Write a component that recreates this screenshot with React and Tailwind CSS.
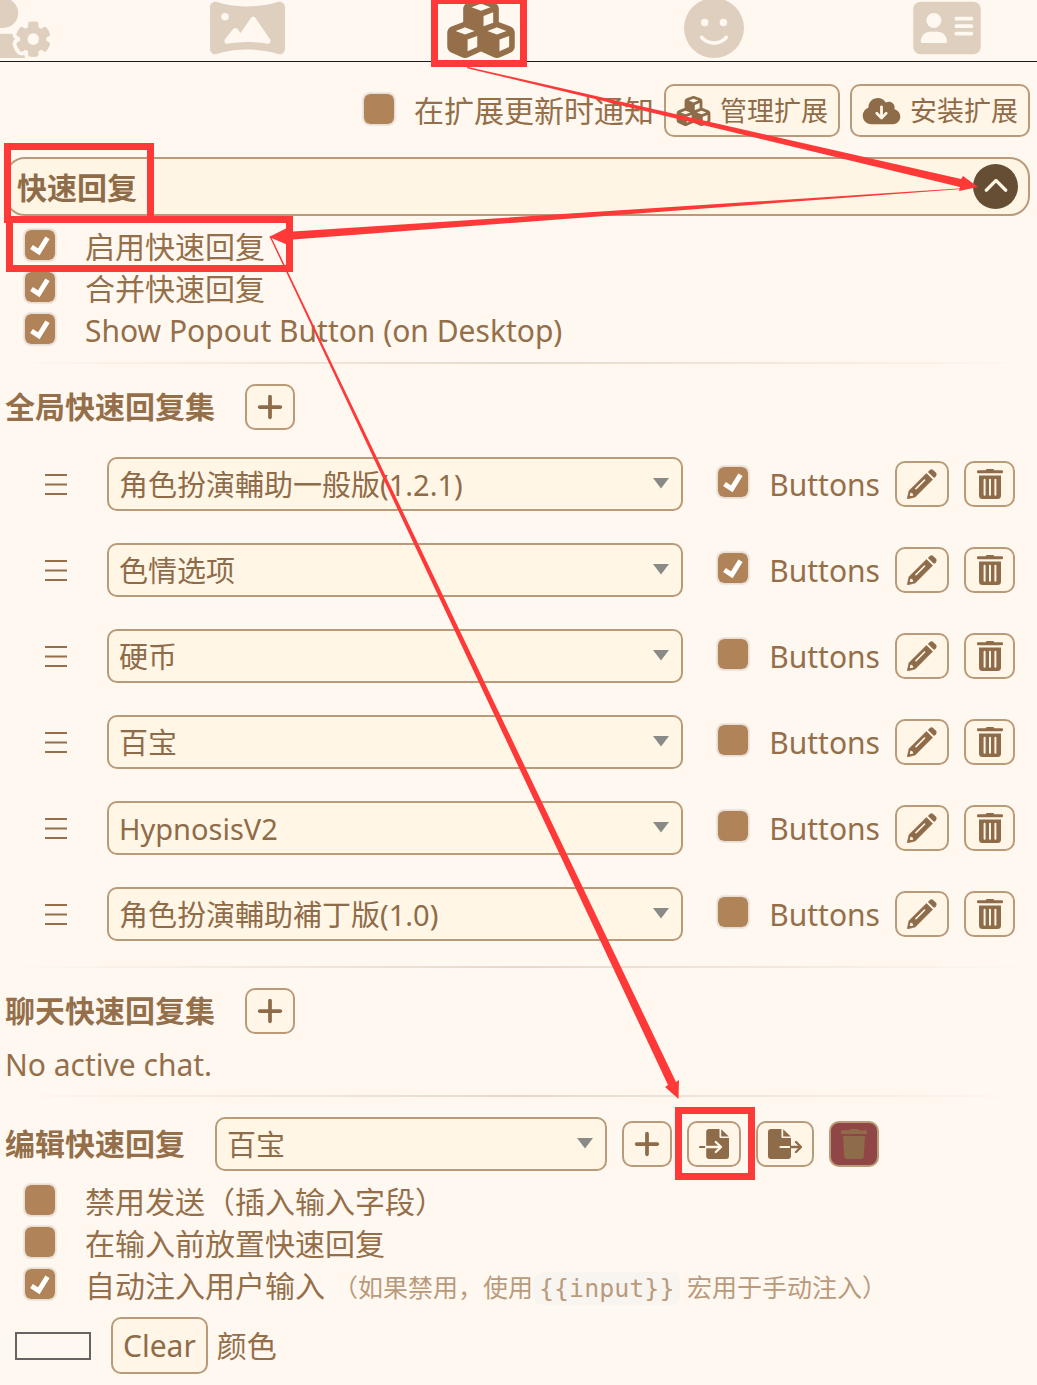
import React from 'react';
import {
  FaUserGear,
  FaPanorama,
  FaCubes,
  FaFaceSmile,
  FaAddressCard,
  FaCloudArrowDown,
  FaChevronUp,
  FaPlus,
} from 'react-icons/fa6';

const QUICK_REPLY_SETS = [
  { name: '角色扮演輔助一般版(1.2.1)', buttons: true },
  { name: '色情选项', buttons: true },
  { name: '硬币', buttons: false },
  { name: '百宝', buttons: false },
  { name: 'HypnosisV2', buttons: false },
  { name: '角色扮演輔助補丁版(1.0)', buttons: false },
];

function PencilIcon() {
  return (
    <svg viewBox="0 0 30 30" className="size-[30px]" aria-hidden="true">
      <path
        d="M0.200 30 2 21.800 19.400 4.400 25.600 10.600 8.200 28z"
        fill="currentColor"
        stroke="currentColor"
        strokeWidth="0.600"
        strokeLinejoin="round"
      />
      <path
        d="M20.900 2.900 22.800 1.100Q24.600-.400 26.400 1.200L28.800 3.600Q30.400 5.400 28.900 7.200L27.100 9.100z"
        fill="currentColor"
      />
      <path d="M9 19.600 17.600 11" stroke="#fff6e8" strokeWidth="1.600" strokeLinecap="round" />
      <path d="M3.600 23.600 5.600 24.400 6.400 26.500 3.400 27.200 2.800 26.600z" fill="#fff6e8" />
    </svg>
  );
}

function TrashCanIcon() {
  return (
    <svg viewBox="0 0 26 30" className="h-[30px] w-[26px]" aria-hidden="true">
      <path
        d="M8.800 1.200Q9 0 10.200 0h5.600Q17 0 17.200 1.200H24.700a1.500 1.500 0 0 1 0 3H1.300a1.500 1.500 0 0 1 0-3zM2 6.500h22V26.500a3.500 3.500 0 0 1-3.500 3.500h-15A3.500 3.500 0 0 1 2 26.500z"
        fill="currentColor"
      />
      <path d="M7.600 10.800v15M13 10.800v15M18.400 10.800v15" stroke="#fff6e8" strokeWidth="2" strokeLinecap="round" />
    </svg>
  );
}

function TrashIcon() {
  return (
    <svg viewBox="0 0 26 30" className="h-[30px] w-[26px]" aria-hidden="true">
      <path
        d="M8.400 1.200Q8.700 0 10 0h6Q17.300 0 17.600 1.200H24.700a1.500 1.500 0 0 1 1.300 1.500V5H0V2.700a1.500 1.500 0 0 1 1.300-1.500zM2 7h22L22.800 27.200A3 3 0 0 1 19.800 30H6.200A3 3 0 0 1 3.200 27.200z"
        fill="currentColor"
      />
    </svg>
  );
}

function ImportIcon() {
  return (
    <svg viewBox="0 0 30 30" className="size-[30px]" aria-hidden="true">
      <path d="M10.200 0H20.500V8Q20.500 9 21.500 9H30V27a3 3 0 0 1-3 3H10.200a3 3 0 0 1-3-3V3a3 3 0 0 1 3-3zM22.200.200 29.800 7.500H22.200z" fill="currentColor" />
      <path d="M1 18H7.200" stroke="currentColor" strokeWidth="2.200" strokeLinecap="round" />
      <path d="M7.200 18H21.500M16.800 13 22 18 16.800 23" fill="none" stroke="#fff6e8" strokeWidth="2.400" strokeLinecap="round" strokeLinejoin="round" />
    </svg>
  );
}

function ExportIcon() {
  return (
    <svg viewBox="0 0 34 30" className="h-[30px] w-[34px]" aria-hidden="true">
      <path d="M3 0H13.500V8Q13.500 9 14.500 9H23V27a3 3 0 0 1-3 3H3a3 3 0 0 1-3-3V3a3 3 0 0 1 3-3zM15.200.200 22.800 7.500H15.200z" fill="currentColor" />
      <path d="M12.500 18H23" stroke="#fff6e8" strokeWidth="2.200" strokeLinecap="round" />
      <path d="M23 18H32.500M28 13 33 18 28 23" fill="none" stroke="currentColor" strokeWidth="2.400" strokeLinecap="round" strokeLinejoin="round" />
    </svg>
  );
}

function Checkbox({ checked = false, label }) {
  return (
    <span className="relative block size-8 shrink-0">
      <input
        type="checkbox"
        defaultChecked={checked}
        aria-label={label}
        className="peer block size-8 appearance-none rounded-[7px] border border-[#e8ddd2] bg-[#b18359] bg-clip-padding shadow-[0_0_1px_1px_#ece5df]"
      />
      <svg
        viewBox="0 0 32 32"
        className="pointer-events-none absolute inset-0 hidden size-8 peer-checked:block"
        aria-hidden="true"
      >
        <path d="M7.500 18 14.800 22.800 23.500 8.800" fill="none" stroke="#fff" strokeWidth="5" />
      </svg>
    </span>
  );
}

function CheckRow({ checked, label, children }) {
  return (
    <label className="flex h-[42px] items-center pl-6">
      <Checkbox checked={checked} />
      <span className="ml-[29px] whitespace-nowrap pt-1">{label}</span>
      {children}
    </label>
  );
}

function IconButton({ label, width, danger = false, children }) {
  return (
    <button
      type="button"
      aria-label={label}
      className={`flex h-[46px] shrink-0 items-center justify-center rounded-[10px] border-2 border-[#b99b79] text-[#8f6c49] ${width} ${
        danger ? 'bg-[#904646]' : 'bg-[#fff6e8]'
      }`}
    >
      {children}
    </button>
  );
}

function SetSelect({ value, label, className }) {
  return (
    <span className={`relative block ${className}`}>
      <select
        aria-label={label}
        defaultValue={value}
        className="block h-[54px] w-full appearance-none rounded-[10px] border-2 border-[#b99b79] bg-[#fff6e6] pl-[10px] pr-10 pt-[2px] text-[29px] text-[#8f6c49]"
      >
        <option>{value}</option>
      </select>
      <svg
        viewBox="0 0 16 11"
        className="pointer-events-none absolute right-[14px] top-[21px] h-[11px] w-4"
        aria-hidden="true"
      >
        <path d="M0 0h16L8 10.5z" fill="#8a8a88" />
      </svg>
    </span>
  );
}

function Divider({ className }) {
  return (
    <hr
      className={`h-[2px] border-0 bg-linear-to-r from-transparent via-[#e6d9cb] to-transparent ${className}`}
    />
  );
}

function SectionTitle({ children }) {
  return <h2 className="mr-[30px] whitespace-nowrap font-bold">{children}</h2>;
}

function TopTab({ label, active = false, children }) {
  return (
    <button
      type="button"
      aria-label={label}
      className={`flex h-[60px] items-center justify-center ${active ? 'text-[#946f49]' : 'text-[#dfcfbf]'}`}
    >
      {children}
    </button>
  );
}

function Annotations() {
  return (
    <svg
      width="1037"
      height="1385"
      viewBox="0 0 1037 1385"
      className="pointer-events-none absolute left-0 top-0 max-w-none"
      aria-hidden="true"
    >
      <g fill="none" stroke="#ff3838" strokeWidth="7">
        <rect x="434.500" y="0.500" width="89" height="63" />
        <rect x="7.500" y="146.500" width="143" height="73" />
        <rect x="9.500" y="219.500" width="280" height="49" />
        <rect x="678.500" y="1110.500" width="73" height="66" />
      </g>
      <g fill="#ff3838">
        <path d="M467 67 468 67 961 179 963 176 978 187 959 191 960 187 467 68.200z" />
        <path d="M962 188.200 293 231.500 287 228 269 237 288 245 293 239.500 962 189z" />
        <path d="M269.500 236.500 271 236.500 676 1082 679 1080 678.500 1099 665 1087 668 1085z" />
      </g>
    </svg>
  );
}

export default function App() {
  return (
    <div className="relative overflow-hidden bg-[#fff8f1] pb-[11px] font-['Noto_Sans','Noto_Sans_CJK_SC',sans-serif] text-[30px] leading-[42px] text-[#946f49]">
      <header className="flow-root h-[62px] border-b border-[#1f1a1c]">
        <nav className="-ml-[102px] -mr-[26px] -mt-[2px] grid grid-cols-5">
          <TopTab label="用户设置">
            <FaUserGear className="h-[60px] w-[75px]" />
          </TopTab>
          <TopTab label="背景">
            <FaPanorama className="h-[60px] w-[75px]" />
          </TopTab>
          <TopTab label="扩展" active>
            <FaCubes className="h-[60px] w-[68px]" />
          </TopTab>
          <TopTab label="角色">
            <FaFaceSmile className="size-[60px]" />
          </TopTab>
          <TopTab label="角色卡">
            <FaAddressCard className="h-[60px] w-[68px]" />
          </TopTab>
        </nav>
      </header>

      <main>
        <div className="mt-[22px] flex items-center justify-end gap-[10px] pr-[7px]">
          <label className="flex items-center gap-[19px]">
            <span className="-mt-1">
              <Checkbox />
            </span>
            <span className="whitespace-nowrap">在扩展更新时通知</span>
          </label>
          <button
            type="button"
            className="flex h-[53px] items-center gap-[9px] whitespace-nowrap rounded-[10px] border-2 border-[#b99b79] bg-[#fff6e8] px-[10px] text-[27px] text-[#8f6c49]"
          >
            <FaCubes className="h-[30px] w-[35px]" />
            管理扩展
          </button>
          <button
            type="button"
            className="flex h-[53px] items-center gap-[9px] whitespace-nowrap rounded-[10px] border-2 border-[#b99b79] bg-[#fff6e8] px-[10px] text-[27px] text-[#8f6c49]"
          >
            <FaCloudArrowDown className="h-[30px] w-[39px]" />
            安装扩展
          </button>
        </div>

        <section>
          <div className="ml-[5px] mr-[7px] mt-5 flex h-[59px] items-center justify-between rounded-[20px] border-2 border-[#b99b79] bg-[#fff5e4] px-[10px] text-[#8f6c49]">
            <h1 className="pt-[2px] font-bold">快速回复</h1>
            <button
              type="button"
              aria-label="收起"
              className="flex size-[45px] items-center justify-center rounded-full bg-[#664e35] text-[#fff5e4]"
            >
              <FaChevronUp className="size-[26px]" />
            </button>
          </div>

          <div className="mt-2">
            <CheckRow checked label="启用快速回复" />
            <CheckRow checked label="合并快速回复" />
            <CheckRow checked label="Show Popout Button (on Desktop)" />
          </div>
        </section>

        <Divider className="mt-3" />

        <section>
          <div className="mt-5 flex items-center pl-[5px]">
            <SectionTitle>全局快速回复集</SectionTitle>
            <IconButton label="添加" width="w-[50px]">
              <FaPlus className="size-[30px]" />
            </IconButton>
          </div>
          <ul className="mt-[27px] flex flex-col gap-8">
            {QUICK_REPLY_SETS.map((set) => (
              <li key={set.name} className="flex items-center pl-[45px] pr-[22px]">
                <span className="w-[62px] shrink-0 cursor-grab" aria-hidden="true">
                  <svg viewBox="0 0 22 22" className="size-[22px]">
                    <path d="M0 2h22M0 11.500h22M0 21h22" stroke="#946f49" strokeWidth="2" />
                  </svg>
                </span>
                <SetSelect value={set.name} label="快速回复集" className="flex-1" />
                <label className="ml-[34px] mr-[15px] flex items-center gap-5">
                  <span className="-mt-1">
                    <Checkbox checked={set.buttons} />
                  </span>
                  <span className="pt-[2px]">Buttons</span>
                </label>
                <IconButton label="编辑" width="w-[54px]">
                  <PencilIcon />
                </IconButton>
                <span className="w-[15px] shrink-0" />
                <IconButton label="删除" width="w-[51px]">
                  <TrashCanIcon />
                </IconButton>
              </li>
            ))}
          </ul>
        </section>

        <Divider className="mt-[25px]" />

        <section>
          <div className="mt-5 flex items-center pl-[5px]">
            <SectionTitle>聊天快速回复集</SectionTitle>
            <IconButton label="添加" width="w-[50px]">
              <FaPlus className="size-[30px]" />
            </IconButton>
          </div>
          <p className="mt-[10px] pl-[5px]">No active chat.</p>
        </section>

        <Divider className="mt-[9px]" />

        <section>
          <div className="mt-5 flex items-center gap-[15px] pl-[5px]">
            <h2 className="mr-[15px] whitespace-nowrap font-bold">编辑快速回复</h2>
            <SetSelect value="百宝" label="编辑快速回复" className="w-[392px]" />
            <IconButton label="新建" width="w-[50px]">
              <FaPlus className="size-[30px]" />
            </IconButton>
            <IconButton label="导入" width="w-[54px]">
              <ImportIcon />
            </IconButton>
            <IconButton label="导出" width="w-[58px]">
              <ExportIcon />
            </IconButton>
            <IconButton label="删除" width="w-[50px]" danger>
              <TrashIcon />
            </IconButton>
          </div>

          <div className="mt-2">
            <CheckRow label="禁用发送（插入输入字段）" />
            <CheckRow label="在输入前放置快速回复" />
            <CheckRow checked label="自动注入用户输入">
              <small className="ml-2 whitespace-nowrap pt-[7px] text-[25px] text-[#b99b7c]">
                （如果禁用，使用
                <code className="rounded-[10px] bg-[#f8f5f1] px-[6px] py-[2px] font-['DejaVu_Sans_Mono',monospace] text-[25px]">
                  {'{{input}}'}
                </code>{' '}
                宏用于手动注入）
              </small>
            </CheckRow>
          </div>

          <div className="mt-3 flex items-center pl-[15px]">
            <input
              id="set-color"
              type="color"
              defaultValue="#fff8f1"
              className="h-7 w-[76px] appearance-none border-2 border-[#666463] bg-transparent p-0 [&::-webkit-color-swatch-wrapper]:p-0 [&::-webkit-color-swatch]:border-0"
            />
            <button
              type="button"
              className="ml-5 h-[57px] rounded-[10px] border-2 border-[#b99b79] bg-[#fff6e8] px-[10px] text-[#8f6c49]"
            >
              Clear
            </button>
            <label htmlFor="set-color" className="ml-[9px]">
              颜色
            </label>
          </div>
        </section>
      </main>

      <Annotations />
    </div>
  );
}
